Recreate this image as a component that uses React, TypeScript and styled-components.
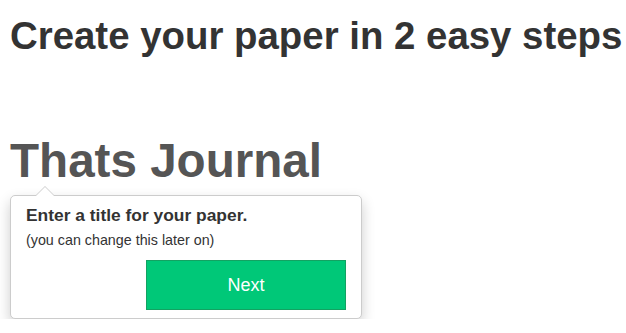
import React from 'react';
import styled, { createGlobalStyle } from 'styled-components';

const GlobalStyle = createGlobalStyle`
  html, body {
    margin: 0;
    padding: 0;
    background: #fff;
  }
  body {
    font-family: "Liberation Sans", Arial, sans-serif;
  }
`;

const Page = styled.div`
  padding: 15px 10px 0 10px;
`;

const Heading = styled.h1`
  margin: 0;
  font-size: 38.4px;
  line-height: 42px;
  font-weight: bold;
  color: #333;
  white-space: nowrap;
`;

const PaperTitle = styled.div`
  margin-top: 76px;
  font-size: 47.6px;
  line-height: 55px;
  font-weight: bold;
  color: #555;
`;

const Popover = styled.div`
  position: relative;
  box-sizing: border-box;
  width: 352px;
  margin-top: 7px;
  padding: 9px 15px 8px 15px;
  background: #fff;
  border: 1px solid #ccc;
  border-radius: 5px;
  box-shadow: 0 6px 14px rgba(0, 0, 0, 0.2);

  &::before,
  &::after {
    content: '';
    position: absolute;
    left: 24px;
    width: 0;
    height: 0;
    border-left: 10px solid transparent;
    border-right: 10px solid transparent;
  }
  &::before {
    top: -10px;
    border-bottom: 10px solid #ccc;
  }
  &::after {
    top: -9px;
    border-bottom: 10px solid #fff;
  }
`;

const PopoverTitle = styled.div`
  font-size: 17.4px;
  line-height: 20px;
  font-weight: bold;
  color: #333;
`;

const PopoverNote = styled.div`
  margin-top: 6px;
  font-size: 14.3px;
  line-height: 18px;
  color: #333;
`;

const Actions = styled.div`
  display: flex;
  justify-content: flex-end;
  margin-top: 11px;
`;

const NextButton = styled.button`
  box-sizing: border-box;
  width: 200px;
  height: 50px;
  background: #00c878;
  border: 1px solid #13a262;
  border-radius: 0;
  color: #fff;
  font-family: "Liberation Sans", Arial, sans-serif;
  font-size: 18px;
  cursor: pointer;
`;

const App: React.FC = () => {
  return (
    <>
      <GlobalStyle />
      <Page>
        <Heading>Create your paper in 2 easy steps</Heading>
        <PaperTitle>Thats Journal</PaperTitle>
        <Popover>
          <PopoverTitle>Enter a title for your paper.</PopoverTitle>
          <PopoverNote>(you can change this later on)</PopoverNote>
          <Actions>
            <NextButton>Next</NextButton>
          </Actions>
        </Popover>
      </Page>
    </>
  );
};

export default App;
